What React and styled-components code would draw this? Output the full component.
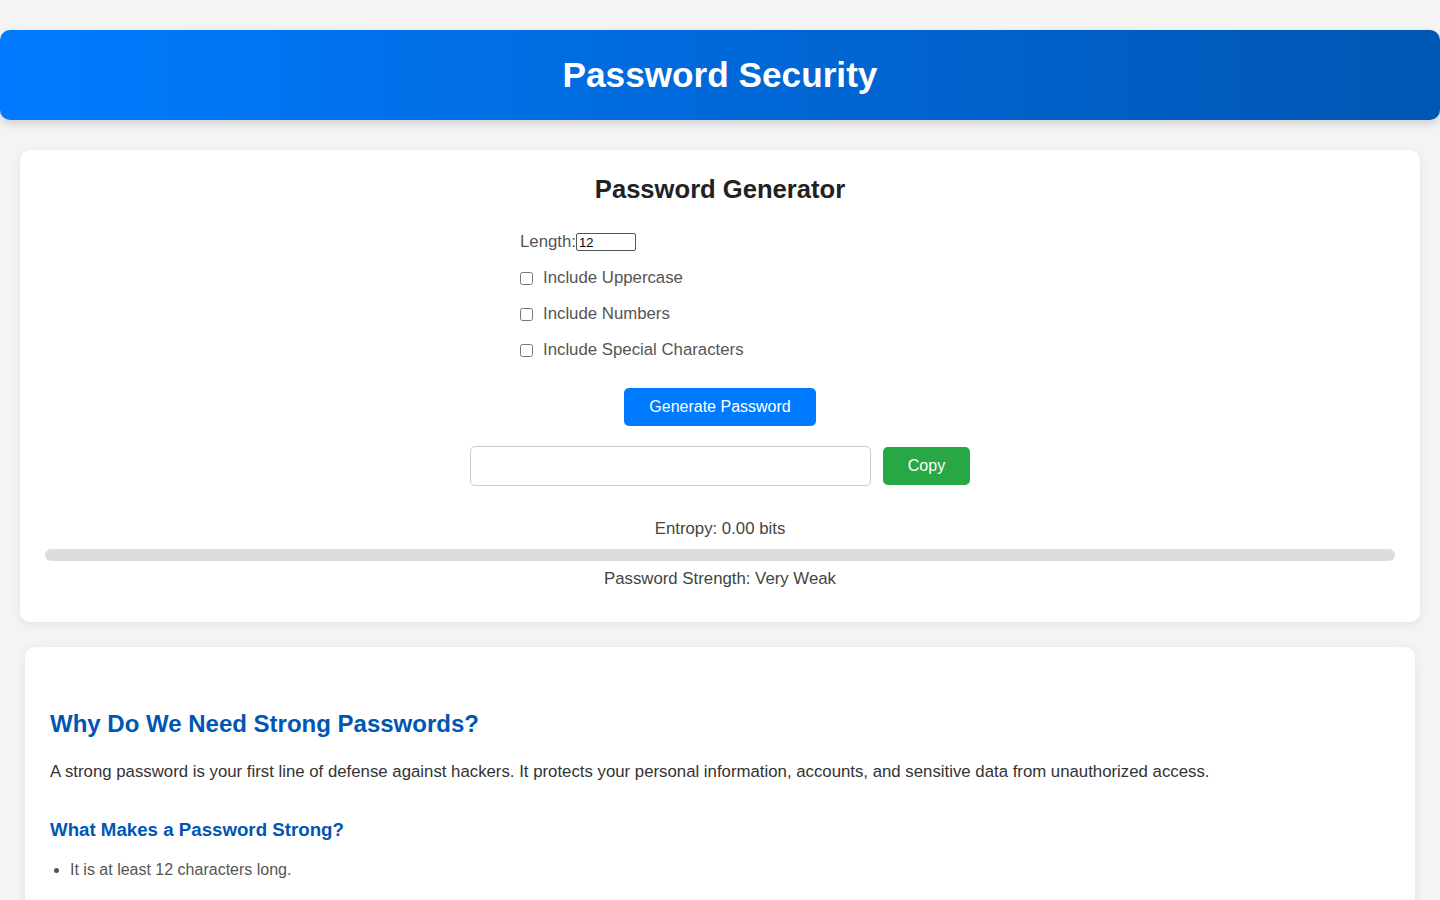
import React, { useState } from 'react';
import styled, { createGlobalStyle } from 'styled-components';

const GlobalStyle = createGlobalStyle`
  body {
    margin: 0;
    padding: 30px 0 0 0;
    background: #f4f4f4;
    font-family: "Liberation Sans", Arial, sans-serif;
    color: #333;
  }
`;

const Header = styled.header`
  height: 90px;
  display: flex;
  align-items: center;
  justify-content: center;
  background: linear-gradient(90deg, #007bff, #0056b3);
  border-radius: 10px;
  box-shadow: 0 4px 10px rgba(0, 0, 0, 0.15);
  h1 {
    margin: 0;
    color: #fff;
    font-size: 35.2px;
    font-weight: bold;
  }
`;

const Card = styled.section`
  background: #fff;
  border-radius: 10px;
  box-shadow: 0 2px 10px rgba(0, 0, 0, 0.08);
  margin: ${(props) => props.margin};
  padding: ${(props) => props.padding};
`;

const Title = styled.h2`
  margin: 0 0 28px 0;
  text-align: center;
  font-size: 25.6px;
  line-height: 30px;
  color: #222;
`;

const Options = styled.div`
  width: 400px;
  margin: 0 auto;
  display: flex;
  flex-direction: column;
  gap: 16px;
`;

const Row = styled.label`
  display: flex;
  align-items: center;
  height: 20px;
  font-size: 16.8px;
  color: #555;
  input[type='checkbox'] {
    width: 13px;
    height: 13px;
    margin: 0 10px 0 0;
  }
`;

const LengthInput = styled.input`
  width: 60px;
  height: 18px;
  box-sizing: border-box;
  margin: 0;
  padding: 1px 2px;
  font-family: "Liberation Sans", Arial, sans-serif;
  font-size: 13px;
  color: #000;
  border: 1px solid #555;
  border-radius: 2px;
`;

const Button = styled.button`
  display: block;
  height: 38px;
  padding: 0 25px;
  border: none;
  border-radius: 5px;
  background: ${(props) => props.bg};
  color: #fff;
  font-family: "Liberation Sans", Arial, sans-serif;
  font-size: 16px;
  cursor: pointer;
`;

const GenerateWrap = styled.div`
  display: flex;
  justify-content: center;
  margin-top: 28px;
`;

const OutputRow = styled.div`
  display: flex;
  justify-content: center;
  align-items: center;
  gap: 12px;
  margin-top: 20px;
`;

const Output = styled.input`
  width: 401px;
  height: 40px;
  box-sizing: border-box;
  border: 1px solid #ccc;
  border-radius: 5px;
  padding: 0 10px;
  font-size: 16px;
`;

const Info = styled.p`
  margin: ${(props) => props.margin};
  text-align: center;
  font-size: 16.8px;
  line-height: 19px;
  color: #444;
`;

const Bar = styled.div`
  height: 12px;
  border-radius: 6px;
  background: #ddd;
  overflow: hidden;
  margin-top: 11px;
`;

const Fill = styled.div`
  height: 100%;
  background: #dc3545;
`;

const Heading = styled.h2`
  margin: 0;
  font-size: 24px;
  line-height: 28px;
  color: #0056b3;
`;

const SubHeading = styled.h3`
  margin: 37px 0 0 0;
  font-size: 18.7px;
  line-height: 22px;
  color: #0056b3;
`;

const Text = styled.p`
  margin: 24px 0 0 0;
  font-size: 16.8px;
  line-height: 20px;
  color: #333;
`;

const List = styled.ul`
  margin: 20px 0 0 0;
  padding-left: 20px;
  li {
    font-size: 16px;
    line-height: 18px;
    color: #555;
    margin-bottom: 24px;
  }
`;

export default function App() {
  const [length, setLength] = useState(12);
  const entropy = 0;

  return (
    <>
      <GlobalStyle />
      <Header>
        <h1>Password Security</h1>
      </Header>

      <Card margin="30px 20px 0 20px" padding="24px 25px 34px 25px">
        <Title>Password Generator</Title>
        <Options>
          <Row>
            Length:
            <LengthInput
              type="number"
              value={length}
              onChange={(e) => setLength(e.target.value)}
            />
          </Row>
          <Row>
            <input type="checkbox" />
            Include Uppercase
          </Row>
          <Row>
            <input type="checkbox" />
            Include Numbers
          </Row>
          <Row>
            <input type="checkbox" />
            Include Special Characters
          </Row>
        </Options>
        <GenerateWrap>
          <Button bg="#007bff">Generate Password</Button>
        </GenerateWrap>
        <OutputRow>
          <Output type="text" readOnly />
          <Button bg="#28a745">Copy</Button>
        </OutputRow>
        <Info margin="33px 0 0 0">Entropy: {entropy.toFixed(2)} bits</Info>
        <Bar>
          <Fill style={{ width: `${Math.min(entropy, 100)}%` }} />
        </Bar>
        <Info margin="8px 0 0 0">Password Strength: Very Weak</Info>
      </Card>

      <Card margin="25px 25px 0 25px" padding="63px 25px 30px 25px">
        <Heading>Why Do We Need Strong Passwords?</Heading>
        <Text>
          A strong password is your first line of defense against hackers. It
          protects your personal information, accounts, and sensitive data from
          unauthorized access.
        </Text>
        <SubHeading>What Makes a Password Strong?</SubHeading>
        <List>
          <li>It is at least 12 characters long.</li>
          <li>It includes uppercase and lowercase letters.</li>
          <li>It contains numbers and special characters.</li>
          <li>It avoids common words and personal information.</li>
        </List>
      </Card>
    </>
  );
}
